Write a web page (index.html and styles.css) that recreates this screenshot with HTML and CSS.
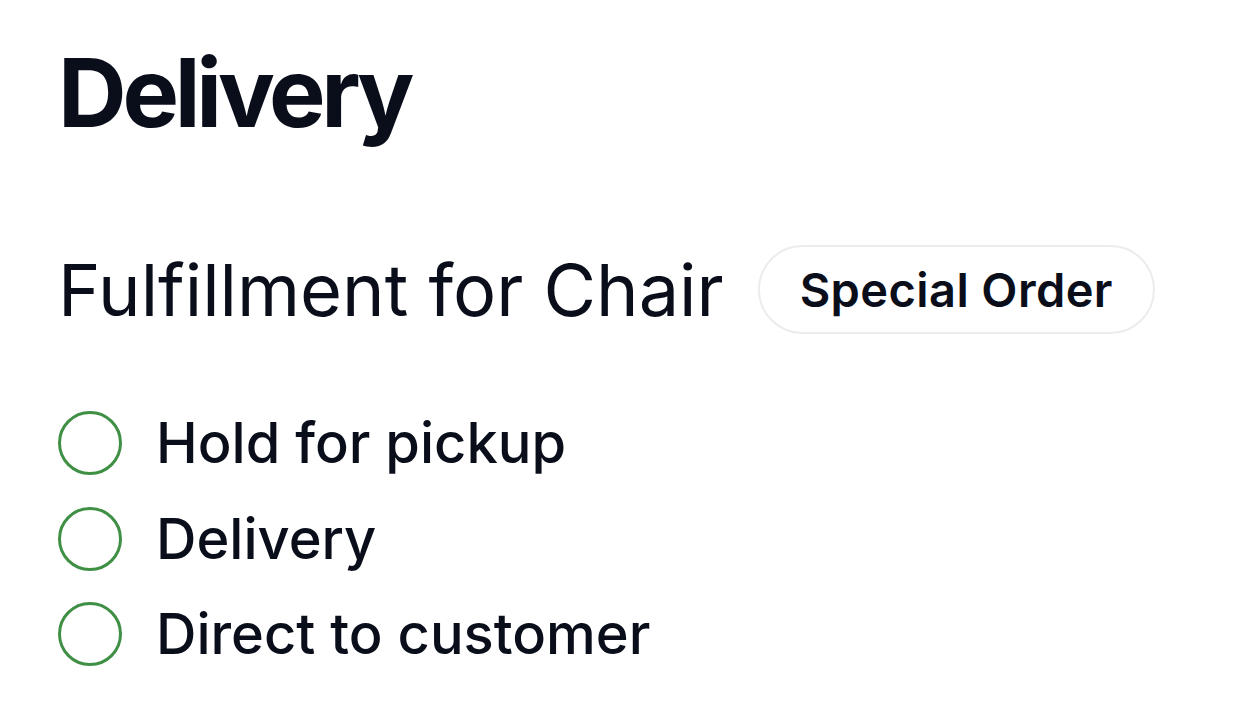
FILE: index.html
```html
<!DOCTYPE html>
<html>
<head>
<meta charset="utf-8">
<link rel="stylesheet" href="styles.css">
</head>
<body>
<main class="panel">
  <h1 class="title">Delivery</h1>
  <div class="section-head">
    <h2 class="subtitle">Fulfillment for Chair</h2>
    <span class="badge">Special Order</span>
  </div>
  <div class="options">
    <label class="option"><span class="radio"></span><span class="option-label">Hold for pickup</span></label>
    <label class="option"><span class="radio"></span><span class="option-label">Delivery</span></label>
    <label class="option"><span class="radio"></span><span class="option-label">Direct to customer</span></label>
  </div>
</main>
</body>
</html>
```
FILE: styles.css
```css
html, body {
  margin: 0;
  padding: 0;
  background: #ffffff;
}
body {
  font-family: Inter, "Noto Sans", sans-serif;
  color: #0a0e1a;
}
.panel {
  padding: 31px 0 0 58px;
}
.title {
  margin: 0;
  font-size: 95px;
  font-weight: 700;
  line-height: 124px;
  letter-spacing: -4.2px;
}
.section-head {
  display: flex;
  align-items: center;
  gap: 34px;
  margin-top: 90px;
}
.subtitle {
  margin: 0;
  font-size: 72px;
  font-weight: 400;
  line-height: 86px;
}
.badge {
  display: inline-flex;
  align-items: center;
  height: 85px;
  padding: 0 40px;
  border: 2.5px solid #ececec;
  border-radius: 999px;
  font-size: 47px;
  font-weight: 600;
  letter-spacing: 0.4px;
}
.options {
  display: flex;
  flex-direction: column;
  gap: 29.5px;
  margin-top: 76px;
}
.option {
  display: flex;
  align-items: center;
  gap: 34px;
  height: 66px;
}
.radio {
  box-sizing: border-box;
  width: 64px;
  height: 64px;
  border: 3px solid #3f8f45;
  border-radius: 50%;
  flex: none;
}
.option-label {
  font-size: 56px;
  font-weight: 500;
  line-height: 66px;
}
```
